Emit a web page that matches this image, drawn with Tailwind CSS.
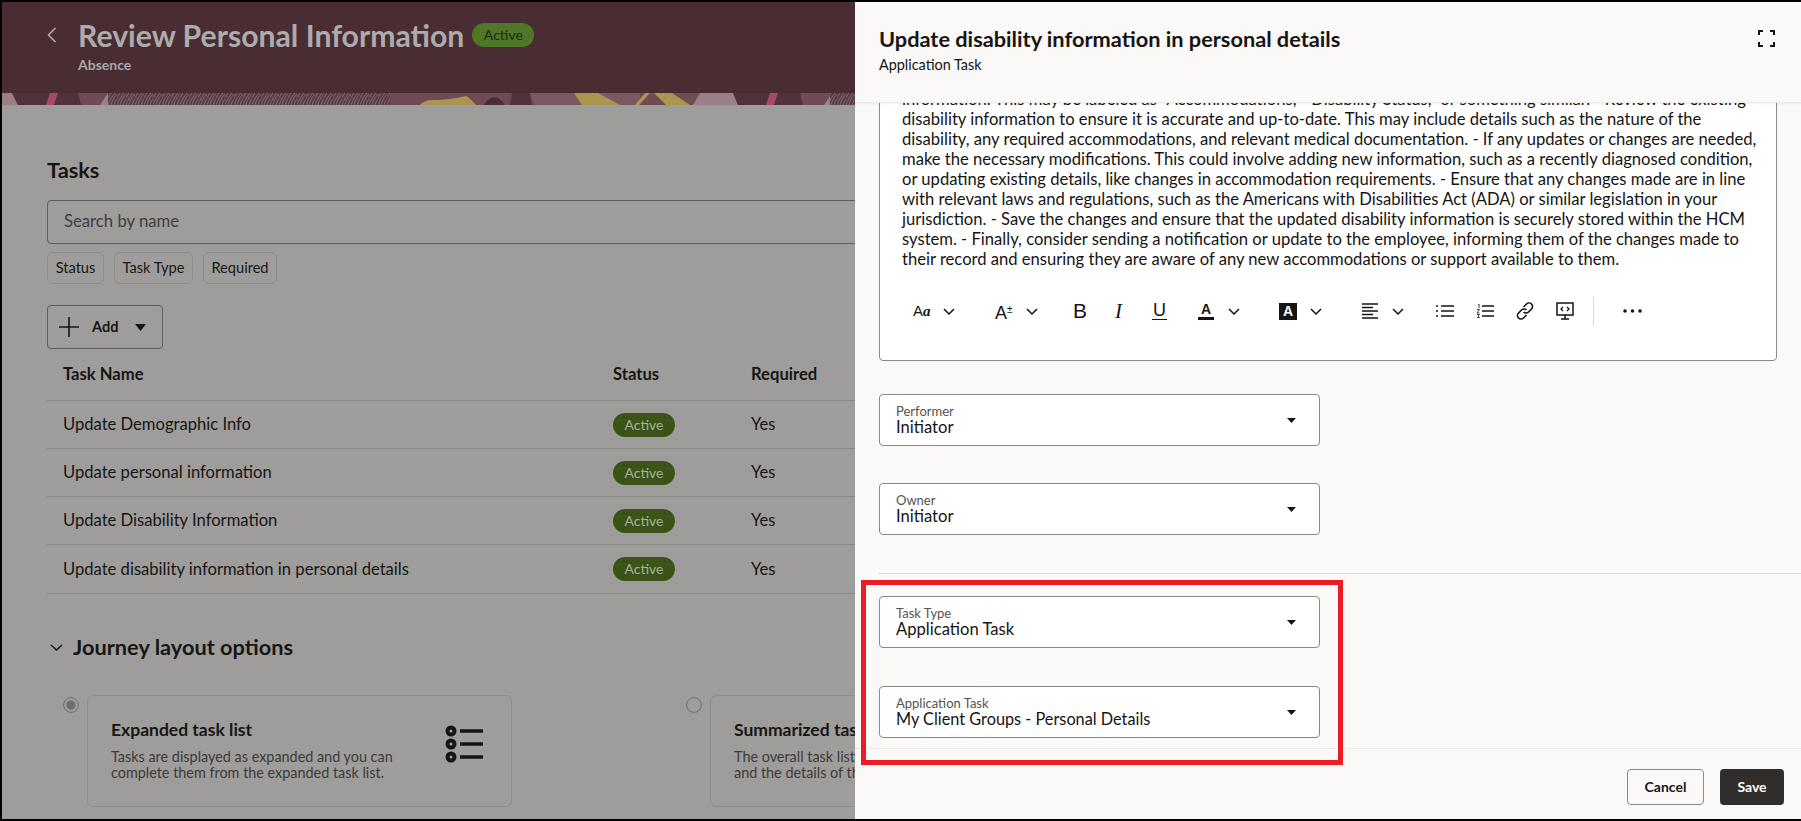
<!DOCTYPE html>
<html lang="en">

<head>
    <meta charset="UTF-8" />
    <meta name="viewport" content="width=device-width, initial-scale=1.0" />
    <title>Review Personal Information</title>
    <script src="https://cdn.jsdelivr.net/npm/@tailwindcss/browser@4"></script>
</head>

<body class="bg-black font-['Lato',sans-serif] overflow-hidden">
    <div class="pt-[2px] pl-[2px] pb-[2px] w-[1801px] h-[821px]">
        <div class="relative h-[817px] bg-[#9e9d9b] overflow-hidden">

            <!-- page header -->
            <div class="h-[91px] bg-[#4a2d33] pl-[45px] pt-[14px]">
                <div class="flex items-center h-[38px]">
                    <svg class="w-[10px] h-[16px]" viewBox="0 0 10 16" fill="none" stroke="#b0aeae" stroke-width="1.6"><path d="M8.5 1L1.5 8l7 7" /></svg>
                    <h1 class="ml-[21px] text-[30.2px] leading-[38px] font-bold text-[#adabab]">Review Personal Information</h1>
                    <span class="ml-[8px] h-[24px] w-[62px] rounded-[12px] bg-[#4e7728] text-[#1b2a10] text-sm leading-[24px] text-center">Active</span>
                </div>
                <div class="ml-[31px] mt-[1px] text-sm leading-[20px] font-bold text-[#aaa8a8]">Absence</div>
            </div>

            <!-- header pattern strip -->
            <svg class="block w-[853px] h-[12px]" viewBox="2 0 853 12">
                <defs>
                    <pattern id="rings" width="9" height="12" patternUnits="userSpaceOnUse">
                        <path d="M0 12C2 7 4 3 7 0M3 12C4 8 6 4 9 1M6 12C7 9 8 7 9 6M0 5C1 3 2 1 3 0" fill="none" stroke="#8f7c80" stroke-width="0.7" />
                    </pattern>
                </defs>
                <rect x="0" y="0" width="855" height="12" fill="#6f4b53" />
                <path d="M2 0H12L18 12H2Z" fill="#9a7f84" />
                <path d="M12 0H51L46 12H18Z" fill="#52323a" />
                <path d="M50 0H58L54 12H46Z" fill="#a84a66" />
                <path d="M58 0H78L81 12H54Z" fill="#52323a" />
                <path d="M108 0L100 12H110L112 0Z" fill="#9a7f84" />
                <rect x="108" y="0" width="282" height="12" fill="#5c3c44" />
                <rect x="108" y="0" width="282" height="12" fill="url(#rings)" />
                <path d="M420 12C423 8 428 7 434 7C446 7 458 5 466 3C470 5 473 9 476 12Z" fill="#ab9650" />
                <path d="M484 12C488 5 494 3 498 5C501 7 504 10 505 12Z" fill="#4a2d33" />
                <path d="M512 0H530L532 12H510Z" fill="#52323a" />
                <path d="M530 0L535 12H640V0Z" fill="#7a5a60" />
                <path d="M574 0H598L620 12H582Z" fill="#ab9650" />
                <path d="M645 0H650L639 12H635Z" fill="#ab9650" />
                <path d="M654 0H672L690 12H666Z" fill="#ab9650" />
                <path d="M700 0H733L738 12H693Z" fill="#9a7f84" />
                <path d="M733 0H775L768 12H738Z" fill="#52323a" />
                <path d="M770 0H778L774 12H766Z" fill="#a84a66" />
                <path d="M778 0H800L803 12H774Z" fill="#52323a" />
                <path d="M832 0L824 12H834L836 0Z" fill="#9a7f84" />
                <rect x="830" y="0" width="25" height="12" fill="#5c3c44" />
                <rect x="830" y="0" width="25" height="12" fill="url(#rings)" />
            </svg>

            <!-- page content, mostly covered by the drawer on the right -->
            <div class="pl-[45px] pr-[46px] text-[#171614]">
                <h2 class="mt-[51px] text-[21.75px] leading-[28px] font-bold">Tasks</h2>
                <div class="mt-[16px] h-[44px] border border-[#5e5d5b] rounded-[4px] pl-[16px] leading-[41px] text-[16.7px] text-[#3f3e3c]">Search by name</div>
                <div class="mt-[8px] flex gap-[10px] text-[14.6px]">
                    <span class="h-[32px] w-[57px] border border-[#8c8b89] rounded-[6px] leading-[30px] text-center">Status</span>
                    <span class="h-[32px] w-[79px] border border-[#8c8b89] rounded-[6px] leading-[30px] text-center">Task Type</span>
                    <span class="h-[32px] w-[74px] border border-[#8c8b89] rounded-[6px] leading-[30px] text-center">Required</span>
                </div>
                <button class="mt-[21px] h-[44px] w-[116px] border border-[#5e5d5b] rounded-[4px] flex items-center pl-[11px] text-[14.5px] font-bold">
                    <svg class="w-[20px] h-[20px]" viewBox="0 0 20 20" stroke="#171614" stroke-width="1.6"><path d="M10 0v20M0 10h20" /></svg>
                    <span class="ml-[13px]">Add</span>
                    <svg class="ml-[17px] w-[11px] h-[7px]" viewBox="0 0 11 7" fill="#171614"><path d="M0 0h11L5.5 7z" /></svg>
                </button>

                <div class="text-[16.6px]">
                    <div class="grid grid-cols-[550px_138px_1fr] h-[52px] items-center pl-[16px] border-b border-[#8a8987] font-bold">
                        <span>Task Name</span><span>Status</span><span>Required</span>
                    </div>
                    <div class="grid grid-cols-[550px_138px_1fr] h-[48px] items-center pl-[16px] border-b border-[#8a8987]">
                        <span>Update Demographic Info</span>
                        <span class="w-[62px] h-[24px] rounded-[12px] bg-[#3a5418] text-[#a8b09a] text-sm leading-[24px] text-center">Active</span>
                        <span>Yes</span>
                    </div>
                    <div class="grid grid-cols-[550px_138px_1fr] h-[48px] items-center pl-[16px] border-b border-[#8a8987]">
                        <span>Update personal information</span>
                        <span class="w-[62px] h-[24px] rounded-[12px] bg-[#3a5418] text-[#a8b09a] text-sm leading-[24px] text-center">Active</span>
                        <span>Yes</span>
                    </div>
                    <div class="grid grid-cols-[550px_138px_1fr] h-[48px] items-center pl-[16px] border-b border-[#8a8987]">
                        <span>Update Disability Information</span>
                        <span class="w-[62px] h-[24px] rounded-[12px] bg-[#3a5418] text-[#a8b09a] text-sm leading-[24px] text-center">Active</span>
                        <span>Yes</span>
                    </div>
                    <div class="grid grid-cols-[550px_138px_1fr] h-[49px] items-center pl-[16px] border-b border-[#8a8987]">
                        <span>Update disability information in personal details</span>
                        <span class="w-[62px] h-[24px] rounded-[12px] bg-[#3a5418] text-[#a8b09a] text-sm leading-[24px] text-center">Active</span>
                        <span>Yes</span>
                    </div>
                </div>

                <div class="mt-[39px] flex items-center h-[28px]">
                    <svg class="ml-[3px] w-[13px] h-[7px]" viewBox="0 0 13 7" fill="none" stroke="#171614" stroke-width="1.5"><path d="M1 1l5.5 5L12 1" /></svg>
                    <h2 class="ml-[10px] text-[21.75px] font-bold">Journey layout options</h2>
                </div>

                <div class="mt-[34px] pl-[16px] flex">
                    <svg class="mt-[2px] w-[16px] h-[16px] shrink-0" viewBox="0 0 16 16" fill="none"><circle cx="8" cy="8" r="7.4" stroke="#6f6e6c" /><circle cx="8" cy="8" r="4.5" fill="#6f6e6c" /></svg>
                    <div class="ml-[8px] w-[425px] h-[112px] shrink-0 border border-[#8f8e8c] rounded-[6px] pl-[23px] pt-[24px] pr-[26px] flex justify-between">
                        <div>
                            <div class="text-[17.5px] leading-[20px] font-bold">Expanded task list</div>
                            <div class="mt-[9px] text-[14.4px] leading-[16px] text-[#3c3b3a]">Tasks are displayed as expanded and you can<br />complete them from the expanded task list.</div>
                        </div>
                        <svg class="mt-[4px] w-[40px] h-[40px] shrink-0" viewBox="0 0 40 40" fill="none" stroke="#161513">
                            <circle cx="6" cy="7" r="3.5" stroke-width="4" /><circle cx="6" cy="20" r="3.5" stroke-width="4" /><circle cx="6" cy="33" r="3.5" stroke-width="4" />
                            <path d="M15 7h23M15 20h23M15 33h23" stroke-width="3.5" />
                        </svg>
                    </div>
                    <svg class="ml-[174px] mt-[2px] w-[16px] h-[16px] shrink-0" viewBox="0 0 16 16" fill="none"><circle cx="8" cy="8" r="7.4" stroke="#6f6e6c" /></svg>
                    <div class="ml-[8px] w-[427px] h-[112px] shrink-0 border border-[#8f8e8c] rounded-[6px] pl-[23px] pt-[24px]">
                        <div class="text-[17.5px] leading-[20px] font-bold">Summarized task list</div>
                        <div class="mt-[9px] text-[14.4px] leading-[16px] text-[#3c3b3a]">The overall task list is displayed on the page<br />and the details of the task open in a drawer.</div>
                    </div>
                </div>
            </div>

            <!-- drawer -->
            <div class="absolute top-0 right-0 bottom-0 w-[946px] bg-[#faf9f7] text-[#161513] flex flex-col">
                <div class="h-[101px] shrink-0 pl-[24px] pr-[26px] pt-[23px] flex justify-between border-b border-[#eceae7] shadow-[0_1px_2px_rgba(0,0,0,0.06)] relative z-10 bg-[#faf9f7]">
                    <div>
                        <h2 class="text-[21.75px] leading-[28px] font-bold">Update disability information in personal details</h2>
                        <div class="mt-[2px] text-[14.4px] leading-[20px]">Application Task</div>
                    </div>
                    <svg class="mt-[5px] w-[17px] h-[17px]" viewBox="0 0 17 17" fill="none" stroke="#161513" stroke-width="2"><path d="M1 5V1h4M12 1h4v4M16 12v4h-4M5 16H1v-4" /></svg>
                </div>

                <div class="flex-1 overflow-hidden">
                    <!-- rich text editor, scrolled so its first line is cut by the header -->
                    <div class="mx-[24px] -mt-[30px] bg-white border border-[#8a8987] rounded-[4px] pl-[22px] pt-[15px] text-[16.6px] leading-[20px]">
                        <p class="whitespace-nowrap">information. This may be labeled as "Accommodations," "Disability Status," or something similar. - Review the existing<br />disability information to ensure it is accurate and up-to-date. This may include details such as the nature of the<br />disability, any required accommodations, and relevant medical documentation. - If any updates or changes are needed,<br />make the necessary modifications. This could involve adding new information, such as a recently diagnosed condition,<br />or updating existing details, like changes in accommodation requirements. - Ensure that any changes made are in line<br />with relevant laws and regulations, such as the Americans with Disabilities Act (ADA) or similar legislation in your<br />jurisdiction. - Save the changes and ensure that the updated disability information is securely stored within the HCM<br />system. - Finally, consider sending a notification or update to the employee, informing them of the changes made to<br />their record and ensuring they are aware of any new accommodations or support available to them.</p>

                        <div class="-ml-[22px] pl-[33px] mt-[27px] mb-[34px] h-[30px] flex items-center">
                            <span class="w-[17px] text-[15px] font-['Liberation_Sans',sans-serif] whitespace-nowrap">A<span class="font-['Liberation_Serif',serif] italic font-bold">a</span></span>
                            <svg class="ml-[13px] w-[12px] h-[7px]" viewBox="0 0 12 7" fill="none" stroke="#161513" stroke-width="1.5"><path d="M1 1l5 5 5-5" /></svg>
                            <span class="ml-[40px] w-[18px] text-[18px] font-['Liberation_Sans',sans-serif] whitespace-nowrap">A<span class="text-[10px] align-[6px]">±</span></span>
                            <svg class="ml-[13px] w-[12px] h-[7px]" viewBox="0 0 12 7" fill="none" stroke="#161513" stroke-width="1.5"><path d="M1 1l5 5 5-5" /></svg>
                            <span class="ml-[35px] w-[13px] text-[21px] font-['Liberation_Sans',sans-serif]">B</span>
                            <span class="ml-[26px] w-[13px] text-[21px] font-['Liberation_Serif',serif] italic text-center">I</span>
                            <span class="ml-[27px] w-[15px] text-[18px] font-['Liberation_Sans',sans-serif] border-b-[1.5px] border-[#161513] leading-[17px] text-center">U</span>
                            <span class="ml-[31px] w-[16px] text-[14px] font-['Liberation_Sans',sans-serif] font-bold border-b-[3px] border-[#161513] leading-[15px] text-center">A</span>
                            <svg class="ml-[14px] w-[12px] h-[7px]" viewBox="0 0 12 7" fill="none" stroke="#161513" stroke-width="1.5"><path d="M1 1l5 5 5-5" /></svg>
                            <span class="ml-[39px] w-[18px] h-[17px] bg-[#161513] text-white text-[14px] font-['Liberation_Sans',sans-serif] font-bold leading-[17px] text-center">A</span>
                            <svg class="ml-[13px] w-[12px] h-[7px]" viewBox="0 0 12 7" fill="none" stroke="#161513" stroke-width="1.5"><path d="M1 1l5 5 5-5" /></svg>
                            <svg class="ml-[40px] w-[16px] h-[16px]" viewBox="0 0 16 16" fill="none" stroke="#161513" stroke-width="1.4"><path d="M0 1h16M0 4.5h11M0 8h16M0 11.5h11M0 15h16" /></svg>
                            <svg class="ml-[14px] w-[12px] h-[7px]" viewBox="0 0 12 7" fill="none" stroke="#161513" stroke-width="1.5"><path d="M1 1l5 5 5-5" /></svg>
                            <svg class="ml-[32px] w-[18px] h-[14px]" viewBox="0 0 18 14" fill="none" stroke="#161513" stroke-width="1.6"><path d="M5 2h13M5 7h13M5 12h13M0 2h2M0 7h2M0 12h2" /></svg>
                            <svg class="ml-[23px] w-[17px] h-[14px]" viewBox="0 0 17 14" fill="none" stroke="#161513"><path d="M5 2h12M5 7h12M5 12h12" stroke-width="1.6" /><path d="M1 .5L2 0v4M0 5.5h2.5L0 9h2.5M0 10.5h2.5L1 12l1.5 1.5H0" stroke-width="0.8" /></svg>
                            <svg class="ml-[22px] w-[18px] h-[18px]" viewBox="0 0 18 18" fill="none" stroke="#161513" stroke-width="1.6"><path d="M7.5 5l3-3a3.5 3.5 0 0 1 5 5l-3 3a3.5 3.5 0 0 1-5 0" /><path d="M10.5 13l-3 3a3.5 3.5 0 0 1-5-5l3-3a3.5 3.5 0 0 1 5 0" /></svg>
                            <svg class="ml-[22px] w-[18px] h-[18px]" viewBox="0 0 18 18" fill="none" stroke="#161513" stroke-width="1.5"><path d="M1 1h16v12H1z" /><path d="M9 13v4M5 17h8" /><path d="M7 5L5 7l2 2M11 5l2 2-2 2" stroke-width="1.3" /></svg>
                            <span class="ml-[19px] w-px h-[29px] bg-[#d8d6d3]"></span>
                            <svg class="ml-[29px] w-[19px] h-[4px]" viewBox="0 0 19 4" fill="#161513"><circle cx="2" cy="2" r="1.8" /><circle cx="9.5" cy="2" r="1.8" /><circle cx="17" cy="2" r="1.8" /></svg>
                        </div>
                    </div>

                    <div class="mt-[33px] mx-[24px] w-[441px] h-[52px] bg-white border border-[#8a8987] rounded-[4px] pl-[16px] pr-[23px] flex justify-between items-center">
                        <div class="-mt-[2px]">
                            <div class="text-[13px] leading-[16px] text-[#55524f]">Performer</div>
                            <div class="text-[16.6px] leading-[16px]">Initiator</div>
                        </div>
                        <svg class="w-[9px] h-[5px]" viewBox="0 0 9 5" fill="#161513"><path d="M0 0h9L4.5 5z" /></svg>
                    </div>
                    <div class="mt-[37px] mx-[24px] w-[441px] h-[52px] bg-white border border-[#8a8987] rounded-[4px] pl-[16px] pr-[23px] flex justify-between items-center">
                        <div class="-mt-[2px]">
                            <div class="text-[13px] leading-[16px] text-[#55524f]">Owner</div>
                            <div class="text-[16.6px] leading-[16px]">Initiator</div>
                        </div>
                        <svg class="w-[9px] h-[5px]" viewBox="0 0 9 5" fill="#161513"><path d="M0 0h9L4.5 5z" /></svg>
                    </div>
                    <div class="mt-[38px] ml-[24px] h-px bg-[#e0dedb]"></div>
                    <div class="mt-[22px] mx-[24px] w-[441px] h-[52px] bg-white border border-[#8a8987] rounded-[4px] pl-[16px] pr-[23px] flex justify-between items-center">
                        <div class="-mt-[2px]">
                            <div class="text-[13px] leading-[16px] text-[#55524f]">Task Type</div>
                            <div class="text-[16.6px] leading-[16px]">Application Task</div>
                        </div>
                        <svg class="w-[9px] h-[5px]" viewBox="0 0 9 5" fill="#161513"><path d="M0 0h9L4.5 5z" /></svg>
                    </div>
                    <div class="mt-[38px] mx-[24px] w-[441px] h-[52px] bg-white border border-[#8a8987] rounded-[4px] pl-[16px] pr-[23px] flex justify-between items-center">
                        <div class="-mt-[2px]">
                            <div class="text-[13px] leading-[16px] text-[#55524f]">Application Task</div>
                            <div class="text-[16.3px] leading-[16px]">My Client Groups - Personal Details</div>
                        </div>
                        <svg class="w-[9px] h-[5px]" viewBox="0 0 9 5" fill="#161513"><path d="M0 0h9L4.5 5z" /></svg>
                    </div>
                </div>

                <div class="h-[71px] shrink-0 border-t border-[#eceae7] pt-[20px] pr-[17px] flex justify-end gap-[16px] text-sm font-bold">
                    <button class="w-[77px] h-[36px] border border-[#8a8987] rounded-[4px]">Cancel</button>
                    <button class="w-[64px] h-[36px] bg-[#312d2a] text-white rounded-[4px]">Save</button>
                </div>

                <!-- red highlight added to the screenshot -->
                <div class="absolute left-[6px] top-[578px] w-[482px] h-[185px] border-[5px] border-[#ed1c24] z-20"></div>
            </div>
        </div>
    </div>
</body>

</html>
